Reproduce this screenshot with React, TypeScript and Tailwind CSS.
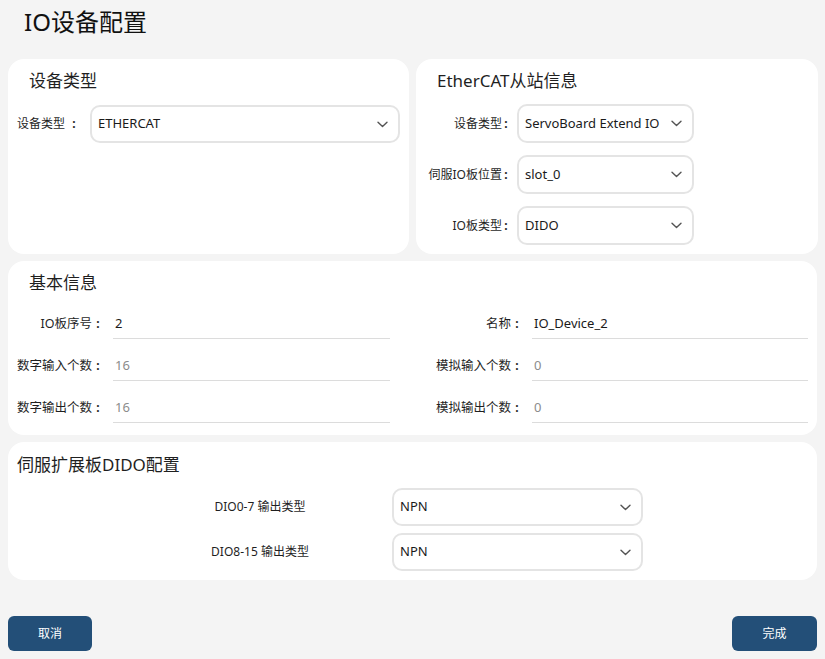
import React from "react";

const font = {
  fontFamily: '"Noto Sans", "Noto Sans CJK SC", sans-serif',
};

function Chevron() {
  return (
    <svg width="11" height="7" viewBox="0 0 11 7" fill="none" className="shrink-0">
      <path d="M1 1.2 L5.5 5.6 L10 1.2" stroke="#555" strokeWidth="1.4" strokeLinecap="round" strokeLinejoin="round" />
    </svg>
  );
}

function SelectBox({ value, className = "" }: { value: string; className?: string }) {
  return (
    <div
      className={`flex items-center justify-between rounded-[10px] border-2 border-[#e4e4e4] bg-white pl-[6px] pr-[10px] ${className}`}
    >
      <span className="text-[13px] text-[#1a1a1a]">{value}</span>
      <Chevron />
    </div>
  );
}

function Card({ children, className = "" }: { children: React.ReactNode; className?: string }) {
  return <div className={`rounded-[16px] bg-white ${className}`}>{children}</div>;
}

function Field({ value, muted }: { value: string; muted?: boolean }) {
  return (
    <div className="flex h-[30px] items-center border-b border-[#dcdcdc] pl-[2px]">
      <span className={`text-[13px] ${muted ? "text-[#8c8c8c]" : "text-[#1a1a1a]"}`}>{value}</span>
    </div>
  );
}

// Right-aligned form label with a centred colon cell at its end
function Label({ text, wide = true, className = "" }: { text: string; wide?: boolean; className?: string }) {
  return (
    <div className={`flex items-center justify-end whitespace-nowrap ${className}`}>
      <span>{text}</span>
      <span className={`${wide ? "w-[12px]" : "w-[8px]"} text-center text-[12px] font-bold`}>:</span>
    </div>
  );
}

export default function App() {
  const slaveRows = [
    { label: "设备类型", value: "ServoBoard Extend IO" },
    { label: "伺服IO板位置", value: "slot_0" },
    { label: "IO板类型", value: "DIDO" },
  ];

  const infoRows = [
    { l: "IO板序号", lv: "2", lm: false, r: "名称", rv: "IO_Device_2", rm: false },
    { l: "数字输入个数", lv: "16", lm: true, r: "模拟输入个数", rv: "0", rm: true },
    { l: "数字输出个数", lv: "16", lm: true, r: "模拟输出个数", rv: "0", rm: true },
  ];

  return (
    <div className="min-h-[659px] w-[825px] bg-[#f4f4f4] px-[8px] text-[#1f1f1f]" style={font}>
      <h1 className="pl-[16px] pt-[6px] text-[24px] font-normal leading-[32px] text-[#111]">IO设备配置</h1>

      <div className="mt-[21px] grid grid-cols-[401px_402px] gap-[7px]">
        <Card className="h-[195px] pl-[9px] pr-[9px] pt-[10px]">
          <div className="pl-[12px] text-[17px] leading-[24px]">设备类型</div>
          <div className="mt-[12px] flex items-center">
            <div className="flex w-[73px] items-center whitespace-nowrap text-[12px]">
              <span>设备类型</span>
              <span className="ml-[3px] w-[12px] text-center font-bold">:</span>
            </div>
            <SelectBox value="ETHERCAT" className="h-[38px] flex-1" />
          </div>
        </Card>

        <Card className="h-[195px] pt-[10px]">
          <div className="pl-[21px] text-[17px] leading-[24px]">EtherCAT从站信息</div>
          <div className="mt-[11px] flex flex-col gap-[12px]">
            {slaveRows.map((r) => (
              <div key={r.label} className="flex items-center">
                <Label text={r.label} wide={false} className="w-[94px] text-[12px]" />
                <SelectBox value={r.value} className="ml-[7px] h-[39px] w-[177px]" />
              </div>
            ))}
          </div>
        </Card>
      </div>

      <Card className="mt-[7px] pb-[12px] pl-[9px] pr-[10px] pt-[10px]">
        <div className="pl-[12px] text-[17px] leading-[24px]">基本信息</div>
        <div className="mt-[14px] flex flex-col gap-[12px]">
          {infoRows.map((row) => (
            <div key={row.l} className="grid grid-cols-[96px_277px_142px_276px] items-center">
              <Label text={row.l} className="pr-[9px] text-[12.5px]" />
              <Field value={row.lv} muted={row.lm} />
              <Label text={row.r} className="pr-[9px] text-[12.5px]" />
              <Field value={row.rv} muted={row.rm} />
            </div>
          ))}
        </div>
      </Card>

      <Card className="mt-[7px] pb-[9px] pl-[9px] pr-[10px] pt-[11px]">
        <div className="text-[17px] leading-[24px]">伺服扩展板DIDO配置</div>
        <div className="mt-[11px] flex flex-col gap-[7px]">
          {[
            { label: "DIO0-7 输出类型", value: "NPN" },
            { label: "DIO8-15 输出类型", value: "NPN" },
          ].map((r) => (
            <div key={r.label} className="flex items-center">
              <span className="ml-[143px] w-[200px] text-center text-[12px]">{r.label}</span>
              <SelectBox value={r.value} className="ml-[32px] h-[38px] w-[251px]" />
            </div>
          ))}
        </div>
      </Card>

      <div className="mt-[36px] flex justify-between">
        <button className="h-[35px] w-[84px] rounded-[6px] bg-[#234f78] text-[12px] text-white">取消</button>
        <button className="h-[35px] w-[85px] rounded-[6px] bg-[#234f78] text-[12px] text-white">完成</button>
      </div>
    </div>
  );
}
